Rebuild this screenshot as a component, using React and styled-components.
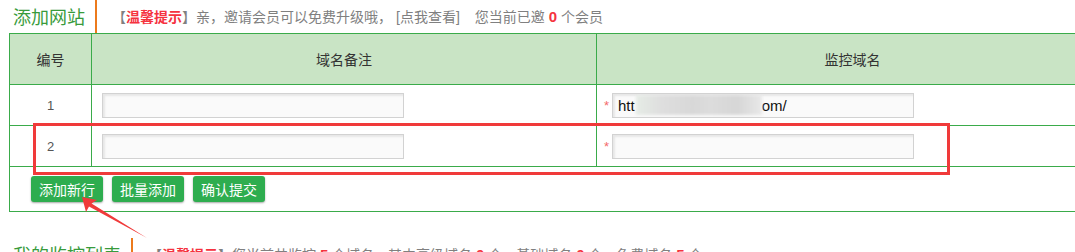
import React from "react";
import styled, { createGlobalStyle } from "styled-components";

const Global = createGlobalStyle`
  html, body { margin: 0; padding: 0; overflow: hidden; background: #fff; }
  body { font-family: "Liberation Sans", "Noto Sans CJK SC", sans-serif; }
`;

const Page = styled.div`
  position: relative;
  width: 1075px;
  height: 252px;
  overflow: hidden;
  padding-left: 9px;
  box-sizing: border-box;
`;

const SectionHead = styled.div`
  display: flex;
  align-items: center;
  height: 33px;
  margin-top: ${(p) => p.$top || 0}px;
`;

const Title = styled.h2`
  margin: 0 10px 0 4px;
  font-family: "Noto Sans CJK SC", sans-serif;
  font-weight: normal;
  font-size: 18px;
  line-height: 33px;
  color: #389b3c;
`;

const Bar = styled.span`
  align-self: stretch;
  width: 2px;
  background: #ec7a1c;
  margin-right: 15px;
`;

const Tip = styled.p`
  margin: 0;
  font-family: "Liberation Sans", "Noto Sans CJK SC", sans-serif;
  font-size: 14px;
  color: #808080;
  line-height: 20px;
  white-space: nowrap;
`;

const Gap = styled.span`
  display: inline-block;
  width: ${(p) => p.$w}px;
`;

const Hot = styled.b`
  color: #f5333f;
  font-weight: bold;
  font-size: ${(p) => (p.$num ? 15 : 14)}px;
`;

const Table = styled.table`
  border-collapse: collapse;
  width: 1099px;
  table-layout: fixed;
  border: 1px solid #3aab4a;
`;

const Th = styled.th`
  background: #c9e4c5;
  border: 1px solid #3aab4a;
  height: 50px;
  padding: 0;
  font-family: "Noto Sans CJK SC", sans-serif;
  font-weight: normal;
  font-size: 14px;
  color: #333;
`;

const Td = styled.td`
  border: 1px solid #3aab4a;
  height: 40px;
  padding: 0 0 0 ${(p) => p.$pl || 0}px;
  text-align: ${(p) => p.$align || "left"};
  vertical-align: middle;
  font-size: 13px;
  color: #555;
`;

const ActionCell = styled.td`
  border: 1px solid #3aab4a;
  height: 44px;
  padding: 0 0 0 21px;
  vertical-align: top;
`;

const Star = styled.span`
  display: inline-block;
  width: 8px;
  margin-right: 3px;
  color: #f46a6a;
  font-size: 13px;
  vertical-align: middle;
  text-align: right;
`;

const Field = styled.div`
  display: inline-flex;
  align-items: center;
  vertical-align: middle;
  box-sizing: border-box;
  width: 302px;
  height: 25px;
  padding-left: 5px;
  background: #fafafa;
  border: 1px solid #d2d2d2;
  box-shadow: inset 2px 2px 2px rgba(0, 0, 0, 0.08);
  font-family: "Liberation Sans", sans-serif;
  font-size: 15px;
  color: #111;
  overflow: hidden;
  white-space: nowrap;
`;

const Blur = styled.span`
  display: inline-block;
  width: 126px;
  height: 20px;
  margin: 0 0 0 1px;
  background: linear-gradient(
    90deg,
    #e6ece6 0%,
    #dedede 20%,
    #d8d8d8 45%,
    #dcdcdc 60%,
    #d6d6d6 80%,
    #e8e8e8 100%
  );
  filter: blur(1.5px);
`;

const Buttons = styled.div`
  display: flex;
  gap: 9px;
  margin-top: 9px;
`;

const Button = styled.button`
  height: 26px;
  padding: 0 8px;
  border: none;
  border-radius: 3px;
  background: #2ead4f;
  box-shadow: 0 1px 2px rgba(0, 0, 0, 0.35);
  color: #fff;
  font-family: "Noto Sans CJK SC", sans-serif;
  font-size: 14px;
  line-height: 26px;
  cursor: pointer;
`;

const Highlight = styled.div`
  position: absolute;
  left: 33px;
  top: 123px;
  width: 917px;
  height: 52px;
  box-sizing: border-box;
  border: 3px solid #f03a3a;
  pointer-events: none;
`;

const Arrow = styled.svg`
  position: absolute;
  left: 0;
  top: 0;
  pointer-events: none;
`;

export default function App() {
  return (
    <>
      <Global />
      <Page>
        <SectionHead>
          <Title>添加网站</Title>
          <Bar />
          <Tip>
            【<Hot>温馨提示</Hot>】亲，邀请会员可以免费升级哦，<Gap $w={4} />[点我查看]<Gap $w={15} />您当前已邀 <Hot $num>0</Hot> 个会员
          </Tip>
        </SectionHead>
        <Table>
          <colgroup>
            <col style={{ width: 82 }} />
            <col style={{ width: 505 }} />
            <col style={{ width: 512 }} />
          </colgroup>
          <thead>
            <tr>
              <Th>编号</Th>
              <Th>域名备注</Th>
              <Th>监控域名</Th>
            </tr>
          </thead>
          <tbody>
            <tr>
              <Td $align="center">1</Td>
              <Td $pl={10}>
                <Field />
              </Td>
              <Td $pl={4}>
                <Star>*</Star>
                <Field>
                  htt<Blur />om/
                </Field>
              </Td>
            </tr>
            <tr>
              <Td $align="center">2</Td>
              <Td $pl={10}>
                <Field />
              </Td>
              <Td $pl={4}>
                <Star>*</Star>
                <Field />
              </Td>
            </tr>
            <tr>
              <ActionCell colSpan={3}>
                <Buttons>
                  <Button>添加新行</Button>
                  <Button>批量添加</Button>
                  <Button>确认提交</Button>
                </Buttons>
              </ActionCell>
            </tr>
          </tbody>
        </Table>
        <SectionHead $top={26}>
          <Title>我的监控列表</Title>
          <Bar />
          <Tip>
            【<Hot>温馨提示</Hot>】您当前共监控 <Hot $num>5</Hot> 个域名，其中高级域名 <Hot $num>0</Hot> 个，基础域名 <Hot $num>0</Hot> 个，免费域名 <Hot $num>5</Hot> 个
          </Tip>
        </SectionHead>
        <Highlight />
        <Arrow width="200" height="252" viewBox="0 0 200 252">
          <polygon
            points="82,197 97,200 91.5,203.5 147,238 89,206.5 86,212"
            fill="#f03a3a"
          />
        </Arrow>
      </Page>
    </>
  );
}
